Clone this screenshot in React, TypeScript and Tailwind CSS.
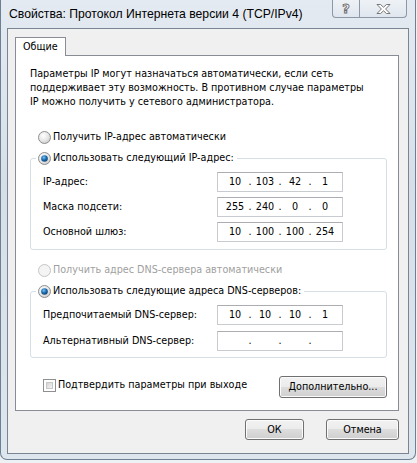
import { Fragment } from "react";

const dlgFont = "font-['DejaVu_Sans_Condensed','DejaVu_Sans',sans-serif] text-[10.7px] leading-[14px] text-black";

function Radio({ checked = false, disabled = false }: { checked?: boolean; disabled?: boolean }) {
  return (
    <svg width="13" height="13" viewBox="0 0 13 13" className="shrink-0">
      <defs>
        <radialGradient id="rfill" cx="0.4" cy="0.35" r="0.7">
          <stop offset="0" stopColor="#ffffff" />
          <stop offset="0.6" stopColor="#e6e6e6" />
          <stop offset="1" stopColor="#c9c9c9" />
        </radialGradient>
        <radialGradient id="rdot" cx="0.4" cy="0.35" r="0.7">
          <stop offset="0" stopColor="#7fc4f5" />
          <stop offset="0.5" stopColor="#1c6fb5" />
          <stop offset="1" stopColor="#0b3d6b" />
        </radialGradient>
      </defs>
      <circle
        cx="6.5"
        cy="6.5"
        r="6"
        fill={disabled ? "#f4f4f4" : "url(#rfill)"}
        stroke={disabled ? "#c4c4c4" : "#8e8f8f"}
      />
      {checked && <circle cx="6.5" cy="6.5" r="3.3" fill="url(#rdot)" />}
    </svg>
  );
}

function IpBox({ parts }: { parts: string[] }) {
  return (
    <div className="flex h-[20px] w-[126px] items-center border border-[#c8cbd0] border-t-[#abadb3] bg-white pl-[5px]">
      {parts.map((p, i) => (
        <Fragment key={i}>
          {i > 0 && <span className="w-[6px] text-center">.</span>}
          <span className="w-[24px] text-center">{p}</span>
        </Fragment>
      ))}
    </div>
  );
}

function Btn({ label, className }: { label: string; className: string }) {
  return (
    <div
      className={`flex items-center justify-center rounded-[3px] border border-[#707070] bg-[linear-gradient(to_bottom,#f2f2f2_0%,#ebebeb_50%,#dddddd_50%,#cfcfcf_100%)] shadow-[inset_0_0_0_1px_#fbfbfb] ${className}`}
    >
      {label}
    </div>
  );
}

function FieldRow({ label, parts }: { label: string; parts: string[] }) {
  return (
    <div className="flex items-center">
      <span className="w-[174px]">{label}</span>
      <IpBox parts={parts} />
    </div>
  );
}

export default function App() {
  return (
    <div className="h-[463px] w-[417px] overflow-hidden bg-[#eef1f4]">
      {/* window frame */}
      <div className="flex h-[460px] w-[416px] flex-col rounded-b-[7px] border-x border-b border-[#6d7f92] bg-[linear-gradient(to_bottom,#e4eaf1_0%,#d6dfe8_40%,#dde5ed_100%)]">
        {/* title bar */}
        <div className="flex h-[28px] items-start justify-between">
          <span className="pl-[8px] pt-[6px] font-['Liberation_Sans',sans-serif] text-[12.2px] leading-[16px] text-black">
            Свойства: Протокол Интернета версии 4 (TCP/IPv4)
          </span>
          <div className="mr-[8px] flex h-[18px] overflow-hidden rounded-b-[4px] border-x border-b border-[#8c98a5] bg-[linear-gradient(to_bottom,#eef2f6,#dfe6ee)]">
            <div className="flex w-[27px] items-center justify-center border-r border-[#8c98a5]">
              <svg width="12" height="13" viewBox="0 0 12 13">
                <text
                  x="6"
                  y="11"
                  textAnchor="middle"
                  fontFamily="DejaVu Sans, sans-serif"
                  fontSize="13"
                  fontWeight="bold"
                  fill="#ffffff"
                  stroke="#6a6a6a"
                  strokeWidth="0.9"
                >
                  ?
                </text>
              </svg>
            </div>
            <div className="flex w-[46px] items-center justify-center">
              <svg width="15" height="10" viewBox="0 0 15 10">
                <polygon
                  points="1,0.5 4.5,0.5 7.5,3.2 10.5,0.5 14,0.5 9.6,5 14,9.5 10.5,9.5 7.5,6.8 4.5,9.5 1,9.5 5.4,5"
                  fill="#ffffff"
                  stroke="#6a6a6a"
                  strokeWidth="0.9"
                  strokeLinejoin="round"
                />
              </svg>
            </div>
          </div>
        </div>

        {/* client area */}
        <div className={`mb-[5px] ml-[6px] mr-[6px] flex flex-1 flex-col border border-[#7a8593] bg-[#f0f0f0] pl-[7px] pr-[9px] pt-[8px] ${dlgFont}`}>
          {/* tab header */}
          <div className="flex">
            <div className="relative z-10 -mb-px flex h-[19px] w-[51px] items-center border-x border-t border-[#898c95] bg-white pl-[7px]">
              Общие
            </div>
          </div>

          {/* tab page */}
          <div className="flex flex-col border border-[#898c95] bg-white pb-[12px] pl-[14px] pr-[12px] pt-[11px]">
            <p>
              Параметры IP могут назначаться автоматически, если сеть
              <br />
              поддерживает эту возможность. В противном случае параметры
              <br />
              IP можно получить у сетевого администратора.
            </p>

            <div className="mt-[20px] flex h-[16px] items-center gap-[2px] pl-[8px]">
              <Radio />
              <span>Получить IP-адрес автоматически</span>
            </div>

            {/* IP group */}
            <div className="mt-[5px] flex flex-col">
              <div className="relative z-10 -mb-[8px] flex h-[16px] pl-[6px]">
                <div className="flex items-center gap-[2px] bg-white pl-[2px] pr-[3px]">
                  <Radio checked />
                  <span>Использовать следующий IP-адрес:</span>
                </div>
              </div>
              <div className="flex w-[357px] flex-col gap-[5px] rounded-[3px] border border-[#d5dfe5] pb-[7px] pl-[12px] pt-[13px]">
                <FieldRow label="IP-адрес:" parts={["10", "103", "42", "1"]} />
                <FieldRow label="Маска подсети:" parts={["255", "240", "0", "0"]} />
                <FieldRow label="Основной шлюз:" parts={["10", "100", "100", "254"]} />
              </div>
            </div>

            <div className="mt-[12px] flex h-[16px] items-center gap-[2px] pl-[8px] text-[#a0a0a0]">
              <Radio disabled />
              <span>Получить адрес DNS-сервера автоматически</span>
            </div>

            {/* DNS group */}
            <div className="mt-[5px] flex flex-col">
              <div className="relative z-10 -mb-[8px] flex h-[16px] pl-[6px]">
                <div className="flex items-center gap-[2px] bg-white pl-[2px] pr-[3px]">
                  <Radio checked />
                  <span>Использовать следующие адреса DNS-серверов:</span>
                </div>
              </div>
              <div className="flex w-[357px] flex-col gap-[6px] rounded-[3px] border border-[#d5dfe5] pb-[6px] pl-[12px] pt-[13px]">
                <FieldRow label="Предпочитаемый DNS-сервер:" parts={["10", "10", "10", "1"]} />
                <FieldRow label="Альтернативный DNS-сервер:" parts={["", "", "", ""]} />
              </div>
            </div>

            <div className="mt-[18px] flex w-[357px] items-start justify-between pl-[13px]">
              <div className="mt-[2px] flex items-center gap-[2px]">
                <div className="h-[13px] w-[13px] border border-[#8e8f8f] bg-white p-[2px]">
                  <div className="h-full w-full border border-[#c7c7c7] bg-[linear-gradient(135deg,#d4d4d4,#f4f4f4)]" />
                </div>
                <span>Подтвердить параметры при выходе</span>
              </div>
              <Btn label="Дополнительно..." className="h-[22px] w-[108px]" />
            </div>
          </div>

          {/* dialog buttons */}
          <div className="mt-[8px] flex justify-end gap-[22px]">
            <Btn label="ОК" className="h-[21px] w-[59px]" />
            <Btn label="Отмена" className="h-[21px] w-[73px]" />
          </div>
        </div>
      </div>
    </div>
  );
}
